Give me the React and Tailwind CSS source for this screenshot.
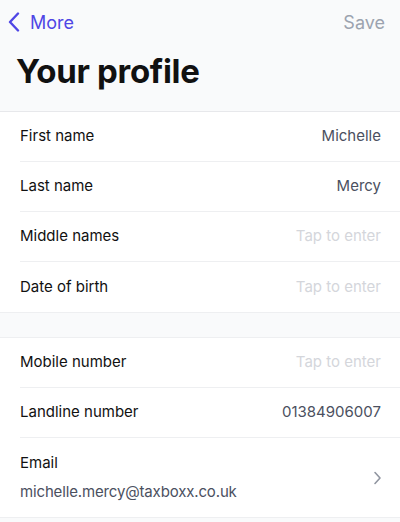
import React from "react";

function Row({ label, value, placeholder, last }) {
  return (
    <div className="pl-5">
      <div
        className={
          "h-[50px] flex items-center justify-between pr-[19px] " +
          (last ? "" : "border-b border-[#eeeff1]")
        }
      >
        <span className="text-[15px] text-[#111111]">{label}</span>
        <span
          className={
            "text-[15px] " + (placeholder ? "text-[#d4d6db]" : "text-[#4b5060]")
          }
        >
          {value}
        </span>
      </div>
    </div>
  );
}

export default function App() {
  return (
    <div
      className="w-[400px] h-[522px] bg-[#f9fafb] overflow-hidden"
      style={{ fontFamily: "Inter, 'Noto Sans', sans-serif" }}
    >
      <div className="bg-[#f9fafb] border-b border-[#e7e8eb]">
        <div className="h-[44px] flex items-center justify-between pl-2 pr-[15px]">
          <div className="flex items-center gap-[10px]">
            <svg width="12" height="20" viewBox="0 0 12 20" className="mt-[-1px]">
              <path
                d="M10 1.5 L2 10 L10 18.5"
                fill="none"
                stroke="#4f46e5"
                strokeWidth="2.4"
                strokeLinecap="round"
                strokeLinejoin="round"
              />
            </svg>
            <span className="text-[18px] text-[#4f46e5]">More</span>
          </div>
          <span className="text-[18px] text-[#9ca3af]">Save</span>
        </div>
        <div className="px-4 pt-[4px] pb-[17px]">
          <h1 className="text-[33px] leading-[46px] font-bold text-[#111111] tracking-[-0.3px]">
            Your profile
          </h1>
        </div>
      </div>

      <div className="bg-white">
        <Row label="First name" value="Michelle" />
        <Row label="Last name" value="Mercy" />
        <Row label="Middle names" value="Tap to enter" placeholder />
        <Row label="Date of birth" value="Tap to enter" placeholder last />
      </div>

      <div className="h-[26px] bg-[#f9fafb] border-y border-[#eeeff1]" />

      <div className="bg-white border-b border-[#eeeff1]">
        <Row label="Mobile number" value="Tap to enter" placeholder />
        <Row label="Landline number" value="01384906007" />
        <div className="pl-5">
          <div className="h-[79px] flex items-center justify-between pr-[18px]">
            <div className="flex flex-col gap-[9px]">
              <span className="text-[15px] leading-[20px] text-[#111111]">Email</span>
              <span className="text-[15px] leading-[20px] text-[#4b5060] tracking-[-0.15px]">
                michelle.mercy@taxboxx.co.uk
              </span>
            </div>
            <svg width="9" height="14" viewBox="0 0 9 14">
              <path
                d="M2 1.5 L7 7 L2 12.5"
                fill="none"
                stroke="#9095a0"
                strokeWidth="1.6"
                strokeLinecap="round"
                strokeLinejoin="round"
              />
            </svg>
          </div>
        </div>
      </div>
    </div>
  );
}
